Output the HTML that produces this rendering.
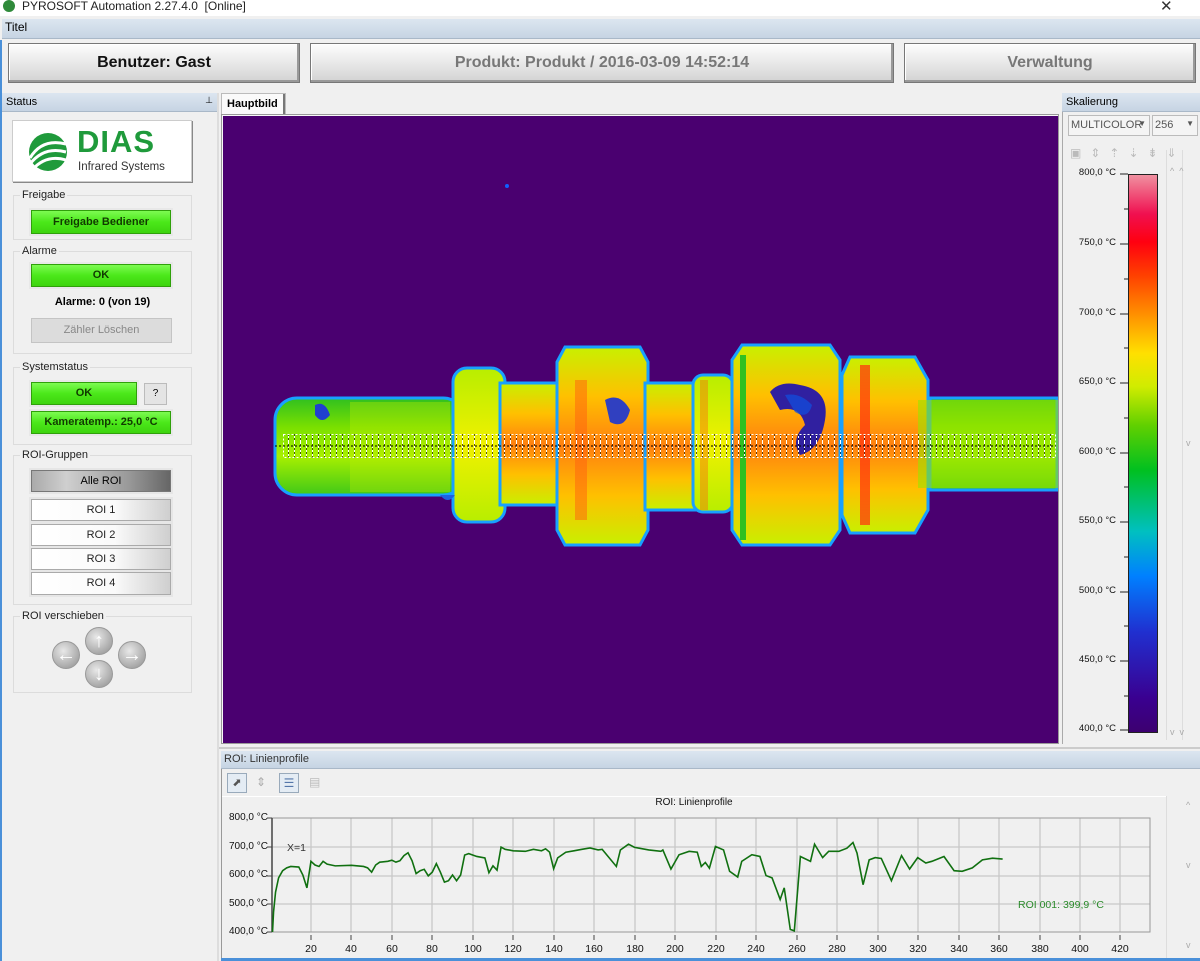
<!DOCTYPE html>
<html><head><meta charset="utf-8"><style>
*{box-sizing:border-box;margin:0;padding:0}
body{width:1200px;height:961px;background:#f0f0f0;font-family:"Liberation Sans",sans-serif;font-size:11px;color:#000;position:relative;overflow:hidden}
.a{position:absolute}
.hdr{background:linear-gradient(#dce6f0,#c6d4e3);border-bottom:1px solid #a9b8c8;font-size:11px;padding:3px 4px;color:#000}
.bigbtn{background:linear-gradient(#fdfdfd,#e4e4e4 60%,#d2d2d2);border:1px solid #777;box-shadow:inset -2px -2px 0 #999,inset 1px 1px 0 #fff;font-weight:bold;font-size:16px;text-align:center;line-height:38px;color:#111}
.grp{border:1px solid #dcdcdc;background:#f0f0f0}
.gl{position:absolute;font-size:11px;background:#f0f0f0;padding:0 2px;left:6px;top:-7px;color:#222}
.gbtn{position:absolute;background:linear-gradient(#7dfb52,#4be81a 50%,#3dd40e);border:1px solid #2fa00a;box-shadow:0 0 0 2px #e8e8e8;font-weight:bold;font-size:11px;text-align:center;color:#103a00}
.wbtn{position:absolute;background:linear-gradient(90deg,#fff,#fafafa 60%,#cfcfcf);border:1px solid #aaa;box-shadow:0 0 0 2px #e6e6e6;text-align:center;font-size:11px;color:#222}
.lbl{position:absolute;font-size:9.5px;color:#111;text-align:right;width:56px}
.xl{position:absolute;font-size:10.5px;color:#111;width:30px;text-align:center;top:943px}
.yl{position:absolute;font-size:10px;color:#111;left:224px;width:44px;text-align:right}
.arr{position:absolute;width:28px;height:28px;border-radius:50%;background:radial-gradient(circle at 40% 35%,#e8e8e8,#a9a9a9 70%,#8c8c8c);border:1px solid #999;color:#fff;font-weight:bold;font-size:20px;text-align:center;line-height:26px}
</style></head><body>
<div class="a" style="left:0;top:0;width:1200px;height:16px;background:#fff"></div>
<div class="a" style="left:3px;top:0;width:12px;height:12px;border-radius:50%;background:#2f8a3a"></div>
<div class="a" style="left:22px;top:-1px;font-size:12px;color:#222">PYROSOFT Automation 2.27.4.0&nbsp; [Online]</div>
<div class="a" style="left:1160px;top:-3px;font-size:15px;color:#333">✕</div>
<div class="a hdr" style="left:2px;top:19px;width:1198px;height:20px;font-size:12px;padding:1px 3px">Titel</div>
<div class="a" style="left:0;top:40px;width:2px;height:921px;background:#4a90d9"></div>
<div class="a bigbtn" style="left:8px;top:43px;width:292px;height:40px">Benutzer: Gast</div>
<div class="a bigbtn" style="left:310px;top:43px;width:584px;height:40px;color:#777">Produkt: Produkt / 2016-03-09 14:52:14</div>
<div class="a bigbtn" style="left:904px;top:43px;width:292px;height:40px;color:#777">Verwaltung</div>
<div class="a hdr" style="left:2px;top:93px;width:215px;height:19px">Status<span style="position:absolute;right:4px;top:2px;font-size:9px">⊥</span></div>
<div class="a" style="left:217px;top:93px;width:2px;height:868px;background:#ddd"></div>
<div class="a" style="left:12px;top:120px;width:180px;height:62px;background:#fff;border:1px solid #ccc;box-shadow:1px 1px 0 #888"></div>
<svg class="a" style="left:28px;top:130px" width="44" height="44" viewBox="0 0 44 44"><circle cx="20" cy="22" r="19" fill="#1f9a3b"/><path d="M2 28 Q14 8 38 14 M2 34 Q16 16 38 22 M4 40 Q18 24 38 30" stroke="#fff" stroke-width="3" fill="none"/></svg>
<div class="a" style="left:77px;top:124px;font-size:31px;font-weight:bold;color:#1f9a3b;letter-spacing:1px">DIAS</div>
<div class="a" style="left:78px;top:161px;font-size:11.5px;color:#333">Infrared Systems</div>
<div class="a grp" style="left:13px;top:195px;width:179px;height:45px"><span class="gl">Freigabe</span></div>
<div class="gbtn" style="left:31px;top:210px;width:140px;height:24px;line-height:22px">Freigabe Bediener</div>
<div class="a grp" style="left:13px;top:251px;width:179px;height:103px"><span class="gl">Alarme</span></div>
<div class="gbtn" style="left:31px;top:264px;width:140px;height:23px;line-height:21px">OK</div>
<div class="a" style="left:13px;top:296px;width:179px;text-align:center;font-weight:bold;font-size:11px">Alarme: 0 (von 19)</div>
<div class="a" style="left:31px;top:318px;width:141px;height:25px;background:#dcdcdc;border:1px solid #c4c4c4;color:#888;text-align:center;line-height:23px">Zähler Löschen</div>
<div class="a grp" style="left:13px;top:367px;width:179px;height:78px"><span class="gl">Systemstatus</span></div>
<div class="gbtn" style="left:31px;top:382px;width:106px;height:23px;line-height:21px">OK</div>
<div class="a" style="left:144px;top:383px;width:23px;height:22px;background:#e4e4e4;border:1px solid #bbb;text-align:center;line-height:20px;font-size:10px">?</div>
<div class="gbtn" style="left:31px;top:411px;width:140px;height:23px;line-height:21px">Kameratemp.: 25,0 °C</div>
<div class="a grp" style="left:13px;top:455px;width:179px;height:150px"><span class="gl">ROI-Gruppen</span></div>
<div class="a" style="left:31px;top:470px;width:140px;height:22px;background:linear-gradient(90deg,#aaa,#cfcfcf 25%,#999 70%,#666);border:1px solid #777;box-shadow:0 0 0 2px #e6e6e6;text-align:center;line-height:20px">Alle ROI</div>
<div class="wbtn" style="left:31px;top:499px;width:140px;height:22px;line-height:20px">ROI 1</div>
<div class="wbtn" style="left:31px;top:524px;width:140px;height:22px;line-height:20px">ROI 2</div>
<div class="wbtn" style="left:31px;top:548px;width:140px;height:22px;line-height:20px">ROI 3</div>
<div class="wbtn" style="left:31px;top:572px;width:140px;height:23px;line-height:21px">ROI 4</div>
<div class="a grp" style="left:13px;top:616px;width:179px;height:77px"><span class="gl">ROI verschieben</span></div>
<div class="arr" style="left:85px;top:627px">↑</div>
<div class="arr" style="left:52px;top:641px">←</div>
<div class="arr" style="left:118px;top:641px">→</div>
<div class="arr" style="left:85px;top:660px">↓</div>
<div class="a" style="left:221px;top:93px;width:65px;height:22px;background:#fafafa;border:1px solid #bbb;border-bottom:none;box-shadow:inset -2px 0 0 #777;font-weight:bold;font-size:11px;padding:4px 5px">Hauptbild</div>
<div class="a" style="left:221px;top:114px;width:838px;height:630px;border:1px solid #999;background:#f8f8f8"></div>
<svg class="a" style="left:223px;top:116px" width="835" height="627" viewBox="223 116 835 627">
<defs>
<linearGradient id="sh" x1="0" y1="0" x2="0" y2="1"><stop offset="0" stop-color="#30c020"/><stop offset=".3" stop-color="#7ae000"/><stop offset=".6" stop-color="#a8f000"/><stop offset="1" stop-color="#40c818"/></linearGradient>
<linearGradient id="dk" x1="0" y1="0" x2="0" y2="1"><stop offset="0" stop-color="#c8f000"/><stop offset=".25" stop-color="#ffc000"/><stop offset=".5" stop-color="#ff8010"/><stop offset=".75" stop-color="#ffc000"/><stop offset="1" stop-color="#c8f000"/></linearGradient>
<linearGradient id="ye" x1="0" y1="0" x2="0" y2="1"><stop offset="0" stop-color="#b8ee00"/><stop offset=".5" stop-color="#f0f000"/><stop offset="1" stop-color="#b8ee00"/></linearGradient>
<pattern id="roi" width="6" height="26" patternUnits="userSpaceOnUse"><line x1="0.5" y1="0" x2="0.5" y2="26" stroke="#fff" stroke-width="1" stroke-dasharray="2 2"/><line x1="0.5" y1="2" x2="0.5" y2="26" stroke="#000" stroke-width="1" stroke-dasharray="2 2" opacity=".6"/></pattern>
</defs>
<rect x="223" y="116" width="835" height="627" fill="#4a0070"/>
<circle cx="507" cy="186" r="2" fill="#1060ff"/>
<g stroke="#18a0ff" stroke-width="3">
<rect x="275" y="398" width="190" height="97" rx="22" fill="url(#sh)"/>
<rect x="453" y="368" width="52" height="154" rx="14" fill="url(#ye)"/>
<rect x="500" y="383" width="60" height="122" fill="url(#dk)"/>
<path d="M565 347 L640 347 L648 362 L648 530 L640 545 L565 545 L557 530 L557 362Z" fill="url(#dk)"/>
<rect x="645" y="383" width="52" height="127" fill="url(#dk)"/>
<rect x="693" y="375" width="40" height="137" rx="10" fill="url(#ye)"/>
<path d="M742 345 L830 345 L840 360 L840 530 L830 545 L742 545 L732 530 L732 360Z" fill="url(#dk)"/>
<path d="M850 357 L915 357 L928 380 L928 510 L915 533 L850 533 L842 515 L842 375Z" fill="url(#dk)"/>
<path d="M930 398 L1057 398 L1057 490 L930 490Z" fill="url(#sh)"/>
</g>
<rect x="350" y="402" width="100" height="90" fill="#c0ec00" opacity=".35"/>
<rect x="918" y="400" width="140" height="88" fill="#9ae400" opacity=".6"/>
<rect x="740" y="355" width="6" height="185" fill="#30c020"/>
<rect x="860" y="365" width="10" height="160" fill="#ff3010" opacity=".7"/>
<rect x="700" y="380" width="8" height="130" fill="#ff6010" opacity=".4"/>
<rect x="575" y="380" width="12" height="140" fill="#ff6010" opacity=".5"/>
<path d="M770 392 Q780 380 800 385 Q830 390 825 420 Q820 450 800 455 Q790 440 805 425 Q800 405 780 410Z" fill="#3020a0"/>
<path d="M785 395 Q800 392 812 405 Q808 420 795 412Z" fill="#1050e0" opacity=".7"/>
<path d="M605 400 Q620 392 630 410 Q625 430 610 422Z" fill="#3040c0"/>
<path d="M315 405 Q325 400 330 415 Q322 425 315 415Z" fill="#2040d0"/>
<path d="M440 495 Q448 505 455 495Z" fill="#2060e0"/>
<rect x="283" y="434" width="773" height="24" fill="url(#roi)"/>
<rect x="283.5" y="434.5" width="772" height="23" fill="none" stroke="#fff" stroke-dasharray="2 2"/>
<line x1="275" y1="446" x2="1056" y2="446" stroke="#000" stroke-dasharray="2 2"/>
</svg>
<div class="a hdr" style="left:1062px;top:93px;width:138px;height:19px">Skalierung</div>
<div class="a" style="left:1062px;top:112px;width:1px;height:632px;background:#aaa"></div>
<div class="a" style="left:1068px;top:115px;width:82px;height:21px;background:#f4f4f4;border:1px solid #bbb;color:#555;font-size:11px;padding:3px 2px;overflow:hidden;white-space:nowrap">MULTICOLOR<span style="position:absolute;right:3px;top:3px;font-size:8px">▼</span></div>
<div class="a" style="left:1152px;top:115px;width:46px;height:21px;background:#f4f4f4;border:1px solid #bbb;color:#555;font-size:11px;padding:3px 2px">256<span style="position:absolute;right:3px;top:3px;font-size:8px">▼</span></div>
<div class="a" style="left:1070px;top:146px;font-size:12px;color:#bbb;letter-spacing:9px">▣⇕⇡⇣⇟⇓</div>
<div class="a" style="left:1128px;top:174px;width:30px;height:559px;border:1px solid #222;background:linear-gradient(to top,#3c0070 0%,#3a0090 6%,#2030d0 18%,#0080ff 28%,#00c0c0 36%,#00c020 47%,#60d000 55%,#d0ec00 62%,#ffe000 68%,#ff9000 75%,#ff4000 82%,#ff0010 88%,#f01050 93%,#f090a0 100%)"></div>
<div class="a" style="left:1166px;top:150px;width:1px;height:590px;background:#ddd"></div>
<div class="a" style="left:1182px;top:150px;width:1px;height:590px;background:#ddd"></div>
<div class="a" style="left:1170px;top:166px;font-size:9px;color:#aaa">^&nbsp;&nbsp;^</div>
<div class="a" style="left:1186px;top:438px;font-size:9px;color:#aaa">v</div>
<div class="a" style="left:1170px;top:727px;font-size:9px;color:#aaa">v&nbsp;&nbsp;v</div>
<div class="lbl" style="left:1060px;top:167px">800,0 °C</div>
<div class="lbl" style="left:1060px;top:237px">750,0 °C</div>
<div class="lbl" style="left:1060px;top:307px">700,0 °C</div>
<div class="lbl" style="left:1060px;top:376px">650,0 °C</div>
<div class="lbl" style="left:1060px;top:446px">600,0 °C</div>
<div class="lbl" style="left:1060px;top:515px">550,0 °C</div>
<div class="lbl" style="left:1060px;top:585px">500,0 °C</div>
<div class="lbl" style="left:1060px;top:654px">450,0 °C</div>
<div class="lbl" style="left:1060px;top:723px">400,0 °C</div>
<svg class="a" style="left:1118px;top:170px" width="10" height="570"><g stroke="#222"><line x1="2" y1="4" x2="10" y2="4"/><line x1="6" y1="39" x2="10" y2="39"/><line x1="2" y1="74" x2="10" y2="74"/><line x1="6" y1="109" x2="10" y2="109"/><line x1="2" y1="144" x2="10" y2="144"/><line x1="6" y1="178" x2="10" y2="178"/><line x1="2" y1="213" x2="10" y2="213"/><line x1="6" y1="248" x2="10" y2="248"/><line x1="2" y1="283" x2="10" y2="283"/><line x1="6" y1="317" x2="10" y2="317"/><line x1="2" y1="352" x2="10" y2="352"/><line x1="6" y1="387" x2="10" y2="387"/><line x1="2" y1="422" x2="10" y2="422"/><line x1="6" y1="456" x2="10" y2="456"/><line x1="2" y1="491" x2="10" y2="491"/><line x1="6" y1="526" x2="10" y2="526"/><line x1="2" y1="560" x2="10" y2="560"/></g></svg>
<div class="a" style="left:219px;top:747px;width:981px;height:2px;background:#ccc"></div>
<div class="a hdr" style="left:221px;top:751px;width:979px;height:18px;padding:2px 3px;color:#333">ROI: Linienprofile</div>
<div class="a" style="left:221px;top:769px;width:1px;height:192px;background:#999"></div>
<div class="a" style="left:227px;top:773px;width:20px;height:20px;border:1px solid #9ab;background:#e4ecf4;font-size:11px;text-align:center;line-height:18px;color:#555">⬈</div>
<div class="a" style="left:256px;top:775px;font-size:12px;color:#aaa">⇕</div>
<div class="a" style="left:279px;top:773px;width:20px;height:20px;border:1px solid #9ab;background:#e4ecf4;font-size:12px;text-align:center;line-height:18px;color:#57a">☰</div>
<div class="a" style="left:309px;top:775px;font-size:12px;color:#bbb">▤</div>
<div class="a" style="left:222px;top:796px;width:944px;height:1px;background:#fff"></div>
<div class="a" style="left:222px;top:797px;width:944px;text-align:center;font-size:10px;color:#111">ROI: Linienprofile</div>
<div class="a" style="left:1166px;top:796px;width:1px;height:165px;background:#ddd"></div>
<div class="a" style="left:1186px;top:800px;font-size:9px;color:#aaa">^</div>
<div class="a" style="left:1186px;top:860px;font-size:9px;color:#aaa">v</div>
<div class="a" style="left:1186px;top:940px;font-size:9px;color:#aaa">v</div>
<div class="yl" style="top:812px">800,0 °C</div>
<div class="yl" style="top:841px">700,0 °C</div>
<div class="yl" style="top:869px">600,0 °C</div>
<div class="yl" style="top:898px">500,0 °C</div>
<div class="yl" style="top:926px">400,0 °C</div>
<svg class="a" style="left:0;top:0" width="1200" height="961">
<g stroke="#c8c8c8" stroke-width="1.3">
<line x1="311" y1="818" x2="311" y2="932"/><line x1="351" y1="818" x2="351" y2="932"/><line x1="392" y1="818" x2="392" y2="932"/><line x1="432" y1="818" x2="432" y2="932"/><line x1="473" y1="818" x2="473" y2="932"/><line x1="513" y1="818" x2="513" y2="932"/><line x1="554" y1="818" x2="554" y2="932"/><line x1="594" y1="818" x2="594" y2="932"/><line x1="635" y1="818" x2="635" y2="932"/><line x1="675" y1="818" x2="675" y2="932"/><line x1="716" y1="818" x2="716" y2="932"/><line x1="756" y1="818" x2="756" y2="932"/><line x1="797" y1="818" x2="797" y2="932"/><line x1="837" y1="818" x2="837" y2="932"/><line x1="878" y1="818" x2="878" y2="932"/><line x1="918" y1="818" x2="918" y2="932"/><line x1="959" y1="818" x2="959" y2="932"/><line x1="999" y1="818" x2="999" y2="932"/><line x1="1040" y1="818" x2="1040" y2="932"/><line x1="1080" y1="818" x2="1080" y2="932"/><line x1="1120" y1="818" x2="1120" y2="932"/>
<line x1="272" y1="847" x2="1150" y2="847"/><line x1="272" y1="876" x2="1150" y2="876"/><line x1="272" y1="904" x2="1150" y2="904"/>
</g>
<rect x="272" y="818" width="878" height="114" fill="none" stroke="#999"/>
<line x1="272" y1="818" x2="272" y2="932" stroke="#444" stroke-width="1.5"/>
<g stroke="#444"><line x1="267" y1="818" x2="272" y2="818"/><line x1="267" y1="847" x2="272" y2="847"/><line x1="267" y1="876" x2="272" y2="876"/><line x1="267" y1="904" x2="272" y2="904"/><line x1="267" y1="932" x2="272" y2="932"/></g>
<g stroke="#444"><line x1="311" y1="935" x2="311" y2="940"/><line x1="351" y1="935" x2="351" y2="940"/><line x1="392" y1="935" x2="392" y2="940"/><line x1="432" y1="935" x2="432" y2="940"/><line x1="473" y1="935" x2="473" y2="940"/><line x1="513" y1="935" x2="513" y2="940"/><line x1="554" y1="935" x2="554" y2="940"/><line x1="594" y1="935" x2="594" y2="940"/><line x1="635" y1="935" x2="635" y2="940"/><line x1="675" y1="935" x2="675" y2="940"/><line x1="716" y1="935" x2="716" y2="940"/><line x1="756" y1="935" x2="756" y2="940"/><line x1="797" y1="935" x2="797" y2="940"/><line x1="837" y1="935" x2="837" y2="940"/><line x1="878" y1="935" x2="878" y2="940"/><line x1="918" y1="935" x2="918" y2="940"/><line x1="959" y1="935" x2="959" y2="940"/><line x1="999" y1="935" x2="999" y2="940"/><line x1="1040" y1="935" x2="1040" y2="940"/><line x1="1080" y1="935" x2="1080" y2="940"/><line x1="1120" y1="935" x2="1120" y2="940"/></g>
<g transform="translate(270.5,932) scale(2.0225,-0.285) translate(0,-400)">
<polyline vector-effect="non-scaling-stroke" fill="none" stroke="#107010" stroke-width="1.6" points="1,400 1.5,470 2.5,540 4,590 6,615 8,625 10,630 14,628 16,600 18,555 20,648 22,635 24,630 26,648 28,638 32,632 40,634 46,630 48,625 50,610 52,635 54,645 58,648 60,652 62,645 64,650 66,668 68,678 70,650 72,605 74,615 76,620 78,597 80,610 82,640 84,610 86,575 88,580 90,600 92,580 94,600 96,670 98,675 102,665 106,660 108,608 110,632 112,617 114,698 116,690 120,685 126,683 130,690 134,685 136,692 138,680 140,622 142,660 146,680 150,685 154,690 158,695 162,688 164,690 171,630 173,688 177,708 180,697 187,688 193,683 194,688 198,621 202,671 207,683 211,680 213,630 215,644 217,624 220,700 224,688 227,613 231,593 233,648 238,671 242,665 245,598 248,590 252,514 254,555 257,409 259,404 262,665 267,648 269,708 273,661 276,683 281,683 285,694 288,714 290,677 293,566 296,653 299,661 302,658 307,580 312,668 316,621 320,661 324,642 327,648 333,665 338,615 342,613 347,625 352,653 357,659 362,656"/>
</g>
<text x="287" y="851" font-family="Liberation Sans" font-size="10.5" fill="#333">X=1</text>
<text x="1018" y="908" font-family="Liberation Sans" font-size="10.5" fill="#2a8a2a">ROI 001: 399,9 °C</text>
</svg>
<div class="xl" style="left:296px">20</div><div class="xl" style="left:336px">40</div><div class="xl" style="left:377px">60</div><div class="xl" style="left:417px">80</div><div class="xl" style="left:458px">100</div><div class="xl" style="left:498px">120</div><div class="xl" style="left:539px">140</div><div class="xl" style="left:579px">160</div><div class="xl" style="left:620px">180</div><div class="xl" style="left:660px">200</div><div class="xl" style="left:701px">220</div><div class="xl" style="left:741px">240</div><div class="xl" style="left:782px">260</div><div class="xl" style="left:822px">280</div><div class="xl" style="left:863px">300</div><div class="xl" style="left:903px">320</div><div class="xl" style="left:944px">340</div><div class="xl" style="left:984px">360</div><div class="xl" style="left:1025px">380</div><div class="xl" style="left:1065px">400</div><div class="xl" style="left:1105px">420</div>
<div class="a" style="left:221px;top:958px;width:979px;height:3px;background:#4a90d9"></div>
</body></html>
